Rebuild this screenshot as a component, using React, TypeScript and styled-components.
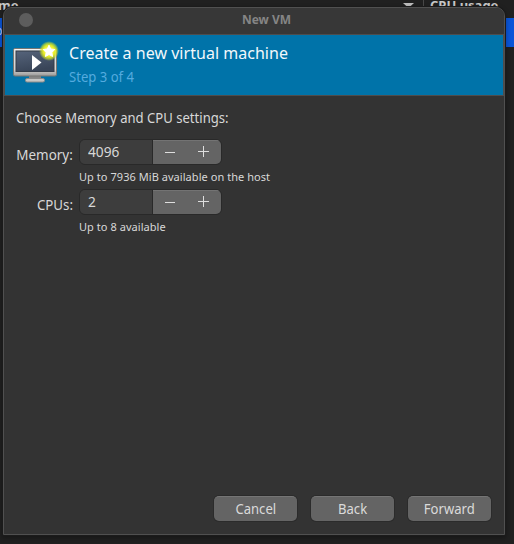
import React from 'react';
import styled, { createGlobalStyle } from 'styled-components';

const GlobalStyle = createGlobalStyle`
  * { box-sizing: border-box; }
  html, body { margin: 0; background: #202020; overflow: hidden; }
  body { font-family: "Noto Sans", sans-serif; }
`;

const Desktop = styled.div`
  position: relative;
  width: 514px;
  height: 544px;
  padding: 7px 9px 9px 3px;
  overflow: hidden;
  background: #202020;
`;

const Narrow = styled.span<{ $scale?: number; $origin?: string }>`
  display: inline-block;
  font-size: 14px;
  white-space: nowrap;
  transform: scaleX(${({ $scale = 0.935 }) => $scale});
  transform-origin: ${({ $origin = 'left' }) => $origin} center;
`;

const ManagerWindow = styled.div`
  position: absolute;
  inset: 0;
`;

const ColumnHeader = styled.div`
  display: flex;
  height: 18px;
  color: #c8c8c8;
  font-size: 13px;
  font-weight: 700;
  line-height: 20px;
  white-space: nowrap;
`;

const NameColumn = styled.div`
  display: flex;
  width: 424px;
  padding-right: 9px;
  border-right: 1px solid #484848;
  span { margin: -5px 0 0 -2px; }
  svg { margin: 3px 0 0 auto; }
`;

const UsageColumn = styled.div`
  margin-top: -5px;
  padding-left: 6px;
`;

const SelectedRow = styled.div`
  height: 29px;
  color: #b7cdf5;
  font-size: 14px;
  line-height: 27px;
  background: #0a55d8;
  span { margin-left: -10px; }
`;

const Dialog = styled.div`
  position: relative;
  display: flex;
  flex-direction: column;
  width: 502px;
  height: 528px;
  border: 1px solid #505050;
  border-radius: 9px 9px 0 0;
  background: #333333;
  box-shadow: 0 0 0 1px #1b1b1b, 0 2px 5px 1px rgba(0, 0, 0, 0.32);
`;

const TitleBar = styled.div`
  position: relative;
  display: flex;
  justify-content: center;
  height: 26px;
  padding-left: 25px;
  color: #858585;
  background: #373737;
  border-radius: 8px 8px 0 0;
  font-size: 12px;
  font-weight: 700;
  line-height: 24px;
`;

const CloseDot = styled.button`
  position: absolute;
  left: 15px;
  top: 5px;
  width: 14px;
  height: 14px;
  padding: 0;
  border: 0;
  border-radius: 50%;
  background: #5d5d5d;
`;

const Banner = styled.header`
  display: flex;
  height: 62px;
  border: 1px solid #4d4d4d;
  padding: 0 0 0 8px;
  background: #0073a9;
  svg { flex: none; margin-top: 6px; }
`;

const BannerText = styled.div`
  margin-left: 8px;
  padding-top: 7px;
`;

const Heading = styled.div`
  color: #f2f8fb;
  font-size: 16px;
  letter-spacing: 0.03px;
  line-height: 22px;
  white-space: nowrap;
`;

const Step = styled.div`
  margin-top: 2px;
  color: #54abdf;
  line-height: 20px;
`;

const Content = styled.main`
  flex: 1;
  padding: 11px 12px 0;
  color: #d8d8d8;
  line-height: 20px;
`;

const Prompt = styled.div`
  height: 20px;
`;

const Form = styled.div`
  display: grid;
  grid-template-columns: 57px auto;
  column-gap: 6px;
  margin-top: 12px;
`;

const Label = styled.label`
  display: flex;
  justify-content: flex-end;
  padding-top: 6px;
`;

const Field = styled.div`
  height: 50px;
`;

const Spin = styled.div`
  display: flex;
  width: 143px;
  height: 26px;
  border: 1px solid #292929;
  border-radius: 6px;
  overflow: hidden;
`;

const Value = styled.div`
  width: 73px;
  padding-left: 8px;
  border-right: 1px solid #292929;
  background: #3d3d3d;
  line-height: 23px;
`;

const Steppers = styled.div`
  display: flex;
  flex: 1;
  background: #646464;
  border-top: 1px solid #737373;
`;

const StepButton = styled.button`
  flex: 1;
  height: 22px;
  padding: 0;
  border: 0;
  background: none;
  svg { display: block; }
`;

const Hint = styled.div`
  padding-top: 4px;
  font-size: 11px;
  letter-spacing: 0.05px;
  line-height: 15px;
  white-space: nowrap;
`;

const Actions = styled.footer`
  display: flex;
  justify-content: flex-end;
  gap: 14px;
  padding: 0 13px 13px 0;
`;

const ActionButton = styled.button`
  width: 83px;
  height: 25px;
  padding: 0;
  border: 0;
  border-top: 1px solid #757575;
  border-radius: 5px;
  color: #dadada;
  background: #646464;
  box-shadow: 0 0 0 1px #2b2b2b;
  font-family: "Noto Sans", sans-serif;
  line-height: 23px;
`;

const MachineIcon = () => (
  <svg width="48" height="44" viewBox="0 0 48 44">
    <defs>
      <linearGradient id="frame" x2="0" y2="1">
        <stop offset="0" stopColor="#e5e5e5" />
        <stop offset="0.75" stopColor="#d4d4d2" />
        <stop offset="1" stopColor="#989898" />
      </linearGradient>
      <linearGradient id="screen" x2="0.3" y2="1">
        <stop offset="0" stopColor="#56647b" />
        <stop offset="1" stopColor="#394558" />
      </linearGradient>
      <radialGradient id="glow">
        <stop offset="0.35" stopColor="#fcf94f" />
        <stop offset="0.6" stopColor="#e9ef20" stopOpacity="0.95" />
        <stop offset="0.8" stopColor="#cfe22a" stopOpacity="0.65" />
        <stop offset="1" stopColor="#aed33b" stopOpacity="0" />
      </radialGradient>
    </defs>
    <path d="M16 34h12v3H16z" fill="#858585" />
    <rect x="12.5" y="37.5" width="19" height="3.5" rx="1.5" fill="#c7c7c5" stroke="#8a8a88" />
    <rect x="0.5" y="7.5" width="43" height="27.5" rx="1.5" fill="url(#frame)" stroke="#777773" />
    <path d="M1.5 8.5h41" stroke="#f4f4f4" />
    <rect x="3" y="10" width="38" height="20.5" fill="url(#screen)" stroke="#353d49" />
    <path d="M19 14v15l9.5-7.5z" fill="#fff" />
    <circle cx="36" cy="10" r="10" fill="url(#glow)" />
    <path d="M36 4.2l1.7 3.8 4.1.5-3 2.9.8 4.1-3.6-2-3.6 2 .8-4.1-3-2.9 4.1-.5z" fill="#fff" stroke="#fff" strokeLinejoin="round" />
  </svg>
);

const SpinBox = ({ value }: { value: string }) => (
  <Spin>
    <Value><Narrow $scale={0.98}>{value}</Narrow></Value>
    <Steppers>
      <StepButton aria-label="Decrease">
        <svg width="34" height="22"><path d="M12 11.5h10" stroke="#dedede" /></svg>
      </StepButton>
      <StepButton aria-label="Increase">
        <svg width="34" height="22"><path d="M11 10.5h11M16.5 5v11" stroke="#dedede" /></svg>
      </StepButton>
    </Steppers>
  </Spin>
);

export default function App() {
  return (
    <Desktop>
      <GlobalStyle />
      <ManagerWindow>
        <ColumnHeader>
          <NameColumn>
            <span>me</span>
            <svg width="11" height="5"><path d="M0 0h11L5.5 5z" fill="#bdbdbd" /></svg>
          </NameColumn>
          <UsageColumn>CPU usage</UsageColumn>
        </ColumnHeader>
        <SelectedRow><span>@</span></SelectedRow>
      </ManagerWindow>
      <Dialog>
        <TitleBar><CloseDot aria-label="Close" />New VM</TitleBar>
        <Banner>
          <MachineIcon />
          <BannerText>
            <Heading>Create a new virtual machine</Heading>
            <Step><Narrow>Step 3 of 4</Narrow></Step>
          </BannerText>
        </Banner>
        <Content>
          <Prompt><Narrow>Choose Memory and CPU settings:</Narrow></Prompt>
          <Form>
            <Label><Narrow $origin="right" $scale={0.96}>Memory:</Narrow></Label>
            <Field><SpinBox value="4096" /><Hint>Up to 7936 MiB available on the host</Hint></Field>
            <Label><Narrow $origin="right" $scale={0.95}>CPUs:</Narrow></Label>
            <Field><SpinBox value="2" /><Hint>Up to 8 available</Hint></Field>
          </Form>
        </Content>
        <Actions>
          <ActionButton><Narrow $origin="center">Cancel</Narrow></ActionButton>
          <ActionButton><Narrow $origin="center">Back</Narrow></ActionButton>
          <ActionButton><Narrow $origin="center">Forward</Narrow></ActionButton>
        </Actions>
      </Dialog>
    </Desktop>
  );
}
